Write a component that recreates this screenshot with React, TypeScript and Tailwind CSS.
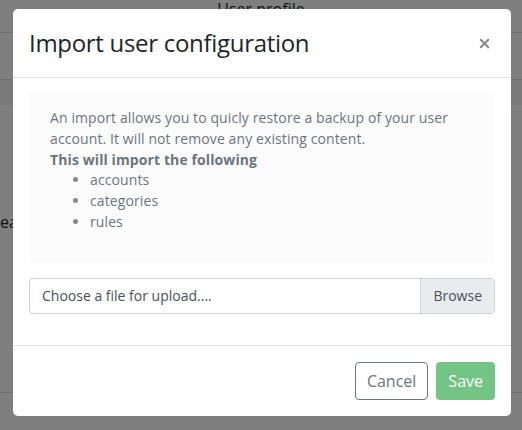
import { X } from "lucide-react";

const items = ["accounts", "categories", "rules"];

function PageBehind() {
  return (
    <div className="h-full w-full bg-white text-[#212529]">
      <div className="h-[33px] border-b border-[#dee2e6] text-center text-base leading-[18px]">
        User profile
      </div>
      <div className="h-[47px] border-b border-[#dee2e6]" />
      <div className="h-[25px] bg-[#f2f2f2]" />
      <div className="mt-[105px] text-base">ea</div>
      <div className="mt-[158px] border-b border-[#dee2e6]" />
    </div>
  );
}

export default function App() {
  return (
    <div
      className="relative h-[430px] w-[522px] overflow-hidden"
      style={{ fontFamily: '"Open Sans", "Noto Sans", sans-serif' }}
    >
      <PageBehind />
      <div className="absolute inset-0 bg-black/50">
        <div className="ml-[13px] mt-[9px] w-[498px] rounded-[5px] bg-white">
          <div className="flex h-[69px] items-center justify-between border-b border-[#dee2e6] pl-[16px] pr-[19px]">
            <h5 className="text-[24px] font-medium tracking-[-0.3px] text-[#212529]">
              Import user configuration
            </h5>
            <button className="text-[#888]">
              <X className="h-[15px] w-[15px]" strokeWidth={3} />
            </button>
          </div>

          <div className="px-[16px] pb-[31px] pt-[15px]">
            <div className="bg-[#fcfcfd] px-[21px] pb-[30px] pt-[15px] text-[14px] leading-[20.8px] tracking-[0.1px] text-[#6c757d]">
              <p>
                An import allows you to quicly restore a backup of your user
                account. It will not remove any existing content.
              </p>
              <p className="font-bold">This will import the following</p>
              <ul className="list-disc pl-[40px] marker:text-[#888]">
                {items.map((item) => (
                  <li key={item}>{item}</li>
                ))}
              </ul>
            </div>

            <div className="mt-[15px] flex h-[36px] overflow-hidden rounded-[4px] border border-[#ced4da] text-[14px] text-[#495057]">
              <div className="flex flex-1 items-center px-[12px]">
                Choose a file for upload....
              </div>
              <div className="flex items-center border-l border-[#ced4da] bg-[#e9ecef] px-[12px]">
                Browse
              </div>
            </div>
          </div>

          <div className="flex justify-end gap-[8px] border-t border-[#dee2e6] p-[16px]">
            <button className="h-[38px] rounded-[4px] border border-[#6c757d] px-[11px] text-[16px] text-[#6c757d]">
              Cancel
            </button>
            <button className="h-[38px] rounded-[4px] bg-[#73c586] px-[12px] text-[16px] text-white">
              Save
            </button>
          </div>
        </div>
      </div>
    </div>
  );
}
